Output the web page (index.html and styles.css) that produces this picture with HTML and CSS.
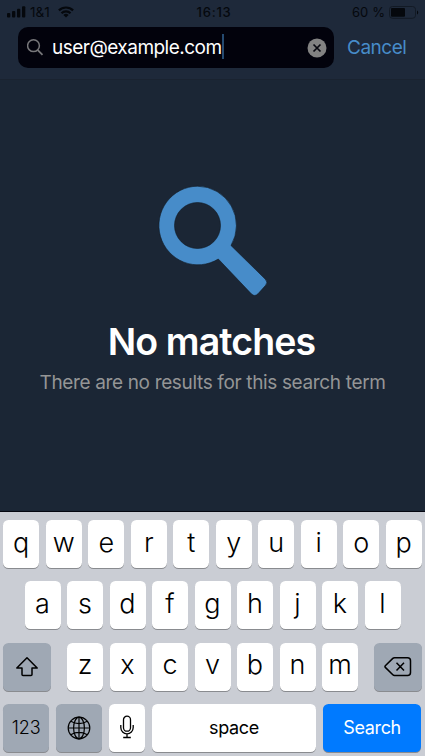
FILE: index.html
```html
<!DOCTYPE html>
<html lang="en">
<head>
<meta charset="utf-8">
<title>Search</title>
<link rel="stylesheet" href="styles.css">
</head>
<body>
<div class="phone">
  <header class="top">
    <div class="status">
      <div class="status-left">
        <svg class="signal" width="19" height="12" viewBox="0 0 19 12"><rect x="0" y="7" width="3.3" height="4.5" rx="1"/><rect x="5" y="5" width="3.3" height="6.5" rx="1"/><rect x="10" y="2.7" width="3.3" height="8.800" rx="1"/><rect x="15" y="0.300" width="3.300" height="11.200" rx="1"/></svg>
        <span class="carrier">1&amp;1</span>
        <svg class="wifi" width="16" height="12" viewBox="0 0 16 12"><g fill="none" stroke="#05080d" stroke-width="2.200"><path d="M0.900 4.400a10.200 10.200 0 0 1 14.200 0"/><path d="M3.500 7.200a6.400 6.400 0 0 1 9 0"/></g><path d="M5.400 8.900a3.800 3.800 0 0 1 5.200 0L8 11.600z"/></svg>
      </div>
      <span class="clock">16:13</span>
      <div class="status-right">
        <span class="percent">60 %</span>
        <svg class="battery" width="30" height="13" viewBox="0 0 30 13"><rect x=".5" y=".5" width="26" height="11.800" rx="3" fill="none" stroke="#121a25"/><rect x="2" y="2" width="14" height="8.800" rx="1"/><path d="M28 4.500a2.300 2.300 0 0 1 0 4z"/></svg>
      </div>
    </div>
    <div class="search-row">
      <div class="search-field">
        <svg class="glass" width="18" height="18" viewBox="0 0 18 18" fill="none" stroke="#77777a" stroke-width="1.500"><circle cx="6.500" cy="6.700" r="5.900"/><path d="M10.800 11.100l4.700 4.700" stroke-width="1.800"/></svg>
        <span class="query">user@example.com</span><span class="caret"></span>
        <svg class="clear" width="20" height="20" viewBox="0 0 20 20"><circle cx="10" cy="10" r="9.500" fill="#828282"/><path d="M6.500 6.500l7 7m0-7l-7 7" stroke="#080810" stroke-width="1.700"/></svg>
      </div>
      <span class="cancel">Cancel</span>
    </div>
  </header>
  <main class="empty">
    <svg class="big-glass" width="112" height="114" viewBox="0 0 112 114"><g fill="#478cc9" stroke="#111720" stroke-width=".6"><path fill-rule="evenodd" d="M40.500 1.200a39 39.300 0 1 0 20.800 72.800L94.500 109q3.300 3 6.500-.2l7.700-8.600q2.600-3-.4-6L74 60.500A39 39.300 0 0 0 40.500 1.200zM40.500 17.500a23 23 0 1 1 0 46a23 23 0 1 1 0-46z"/></g></svg>
    <h1 class="title">No matches</h1>
    <p class="subtitle">There are no results for this search term</p>
  </main>
  <section class="keyboard">
    <div class="keys"><span class="key">q</span><span class="key">w</span><span class="key">e</span><span class="key">r</span><span class="key">t</span><span class="key">y</span><span class="key">u</span><span class="key">i</span><span class="key">o</span><span class="key">p</span></div>
    <div class="keys"><span class="key">a</span><span class="key">s</span><span class="key">d</span><span class="key">f</span><span class="key">g</span><span class="key">h</span><span class="key">j</span><span class="key">k</span><span class="key">l</span></div>
    <div class="keys spread">
      <span class="key gray edge"><svg width="24" height="22" viewBox="0 0 24 22" fill="none" stroke="#000" stroke-width="1.500" stroke-linejoin="round"><path d="M12 1.700L22.200 12H17v6.500q0 1-1 1H8q-1 0-1-1V12H1.800z"/></svg></span>
      <div class="keys"><span class="key">z</span><span class="key">x</span><span class="key">c</span><span class="key">v</span><span class="key">b</span><span class="key">n</span><span class="key">m</span></div>
      <span class="key gray edge"><svg width="28" height="22" viewBox="0 0 28 22" fill="none" stroke="#000" stroke-width="1.500" stroke-linejoin="round"><path d="M10.500 1.700H23.500q3 0 3 3v11.800q0 3-3 3H10.500q-1 0-1.700-.7L1.300 11.400q-.7-.8 0-1.600L8.800 2.400q.7-.7 1.700-.7zM12.500 6.700l7.500 7.800m0-7.800l-7.500 7.800"/></svg></span>
    </div>
    <div class="keys bottom">
      <span class="key gray word numbers">123</span>
      <span class="key gray globe"><svg width="24" height="24" viewBox="0 0 24 24" fill="none" stroke="#000" stroke-width="1.200"><circle cx="12" cy="12" r="10.800"/><ellipse cx="12" cy="12" rx="5.400" ry="10.800"/><path d="M12 1.200v21.600M1.200 12h21.600M3.700 5.300q8.300 4.600 16.600 0M3.700 18.700q8.300-4.600 16.600 0"/></svg></span>
      <span class="key mic"><svg width="14" height="24" viewBox="0 0 14 24" fill="none" stroke="#000" stroke-width="1.300"><rect x="3.500" y="1.200" width="7" height="15" rx="3.500"/><path d="M.8 10v2.600a6.200 6.200 0 0 0 12.400 0V10M7 18.800v3.700M3.200 22.500h7.600"/></svg></span>
      <span class="key word space">space</span>
      <span class="key word go">Search</span>
    </div>
  </section>
</div>
</body>
</html>
```
FILE: styles.css
```css
* { box-sizing: border-box; }
body { margin: 0; font-family: Inter, "Liberation Sans", sans-serif; }
svg { display: block; flex: none; }
.phone { width: 425px; height: 756px; display: flex; flex-direction: column; overflow: hidden; background: #1b2635; }
.top { height: 80px; background: #1e293a; border-bottom: 1px solid #1a2330; }
.status { height: 27px; padding: 0 6px 3px 7px; display: grid; grid-template-columns: 1fr auto 1fr; align-items: center; color: #05080d; fill: #05080d; font-size: 13px; line-height: 16px; }
.status-left, .status-right { display: flex; align-items: center; }
.status-right { justify-content: flex-end; }
.carrier { margin: 0 8px 0 4px; font-size: 13.500px; letter-spacing: 0; }
.clock { padding-left: 2px; font-weight: 500; letter-spacing: .8px; }
.percent { margin-right: 4px; letter-spacing: .1px; }
.search-row { display: flex; align-items: center; padding-left: 18px; }
.search-field { width: 316px; height: 41px; border-radius: 10px; background: #02020c; display: flex; align-items: center; padding: 0 7px 0 9px; }
.query { margin: -1px 0 0 7px; color: #fff; font-size: 19px; letter-spacing: -.52px; white-space: nowrap; }
.caret { width: 2px; height: 25px; margin-top: -2px; background: #254a70; }
.clear { margin-left: auto; }
.cancel { margin: -1px 0 0 13px; color: #478cc9; font-size: 19px; letter-spacing: -.5px; }
.empty { height: 431px; padding-top: 105px; display: flex; flex-direction: column; align-items: center; }
.title { margin: 20px 2px 0 0; color: #fff; font-size: 37.500px; line-height: 46px; font-weight: 600; letter-spacing: -.9px; white-space: nowrap; }
.subtitle { margin: 6px 0 0; color: #949596; font-size: 19px; line-height: 24px; letter-spacing: -.35px; white-space: nowrap; }
.keyboard { height: 245px; border-top: 1px solid #050711; padding: 8px 3.300px 0; background: #cacdd4; display: flex; flex-direction: column; gap: 13.300px; }
.keys { display: flex; justify-content: center; gap: 6.500px; }
.spread { justify-content: space-between; gap: 0; }
.key { width: 36px; height: 48px; flex: none; border-radius: 5.500px; background: #fff; box-shadow: 0 1px 0 #898b8f; display: flex; align-items: center; justify-content: center; padding-bottom: 3px; color: #000; font-size: 27px; line-height: 32px; font-weight: 300; }
.gray { background: #9fa8b4; padding: 0; }
.edge { width: 47.500px; }
.bottom { justify-content: flex-start; gap: 6.900px; }
.word { font-size: 18px; font-weight: 400; padding-bottom: 0; letter-spacing: -.35px; }
.numbers { width: 45.700px; font-weight: 350; letter-spacing: -.1px; }
.globe { width: 46.300px; }
.mic { padding-bottom: 2px; }
.space { width: 164px; }
.go { width: 98.500px; background: #007aff; color: #fff; }
```
